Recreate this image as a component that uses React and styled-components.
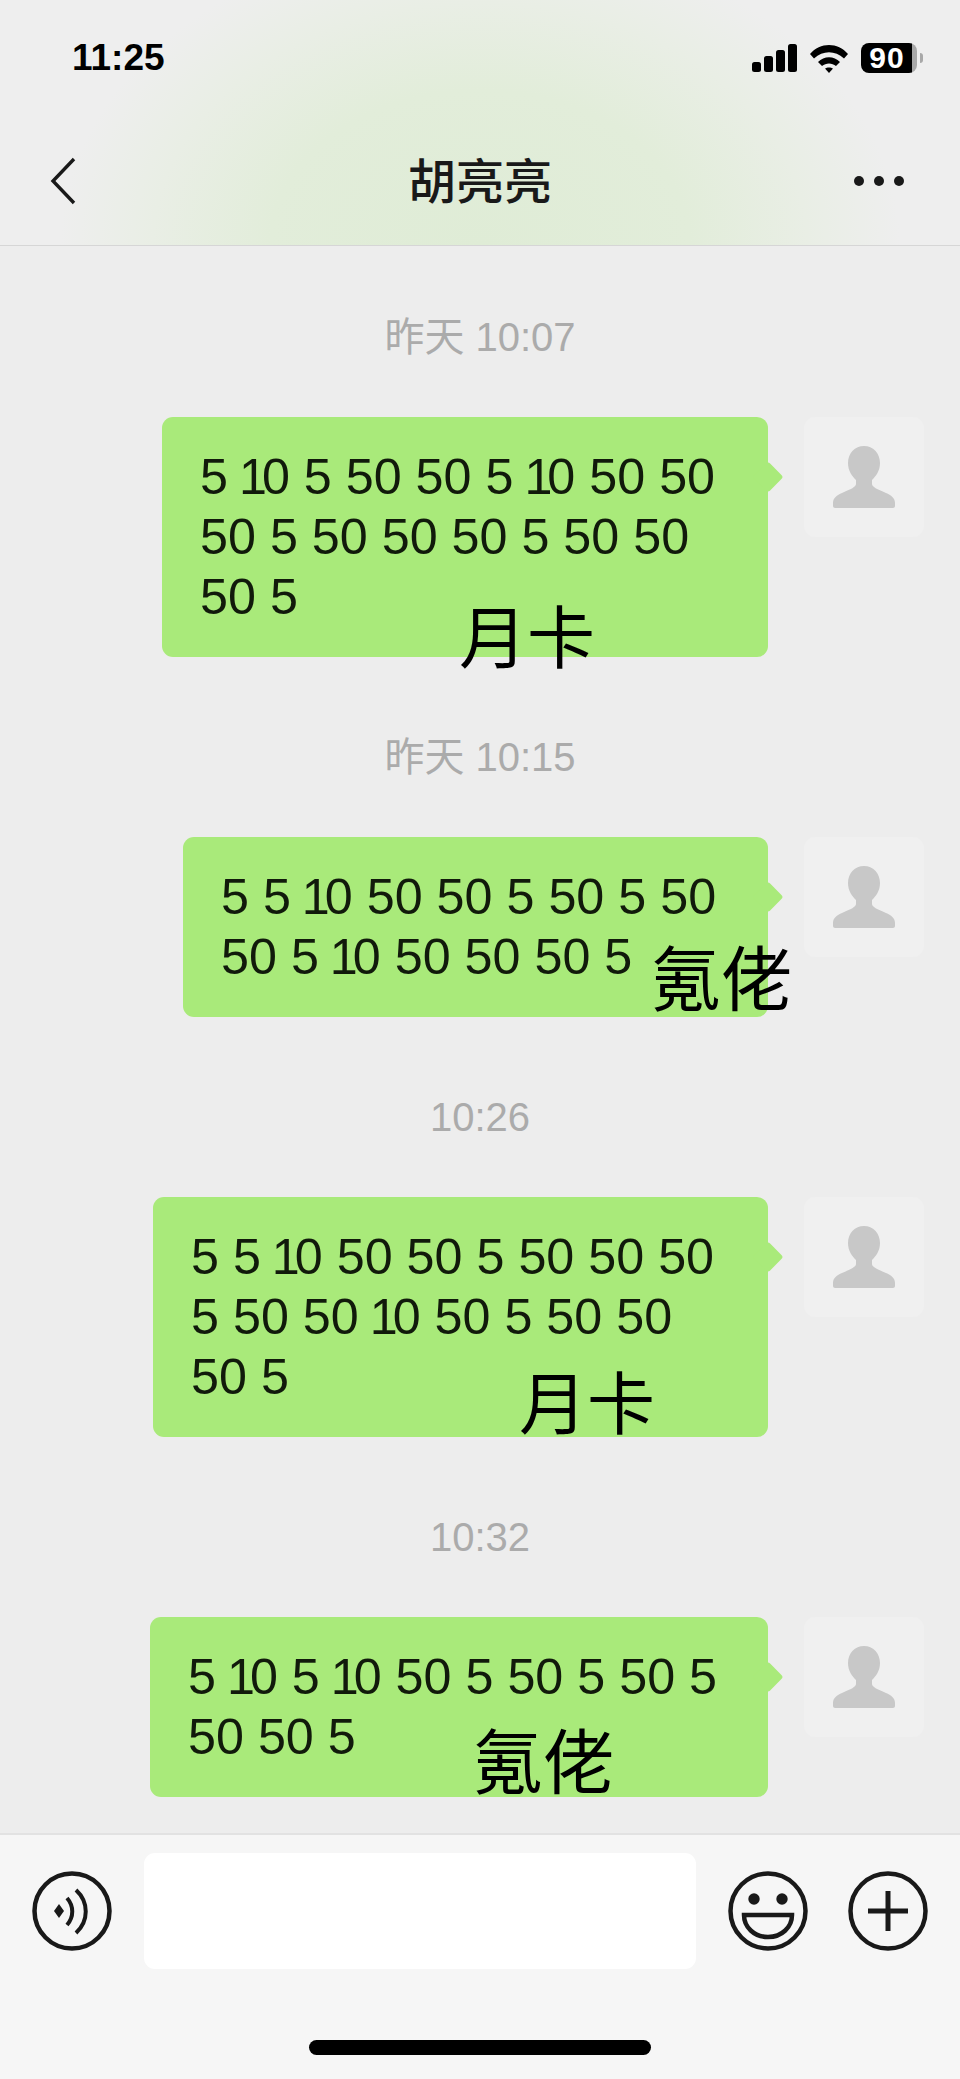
import React from 'react'
import styled, { createGlobalStyle } from 'styled-components'

const Global = createGlobalStyle`
  html, body { margin: 0; padding: 0; background: #ededed; }
  * { box-sizing: border-box; }
`

const Phone = styled.div`
  width: 960px;
  height: 2079px;
  display: flex;
  flex-direction: column;
  overflow: hidden;
  background: #ededed;
  font-family: "Liberation Sans", "Noto Sans CJK SC", sans-serif;
`

const Header = styled.header`
  height: 246px;
  flex-shrink: 0;
  display: flex;
  flex-direction: column;
  border-bottom: 1px solid #d6d6d6;
  background: radial-gradient(ellipse 420px 310px at 50% 100%, #dfecd6 0%, #e2edda 50%, #e9eee5 78%, #eeeeee 100%);
`

const StatusBar = styled.div`
  height: 116px;
  padding: 0 43px 0 72px;
  display: flex;
  align-items: center;
  justify-content: space-between;
`

const Clock = styled.span`
  font-size: 37px;
  font-weight: 700;
  color: #000;
`

const StatusIcons = styled.div`
  display: flex;
  align-items: center;
  gap: 13px;
`

const Battery = styled.div`
  position: relative;
  width: 56px;
  height: 30px;
  border-radius: 8px;
  background: linear-gradient(90deg, #000 0 91%, #a8a8a8 91% 100%);
  color: #fff;
  font-size: 30px;
  font-weight: 700;
  letter-spacing: 1px;
  display: flex;
  align-items: center;
  justify-content: center;
  padding-right: 4px;
  &::after {
    content: "";
    position: absolute;
    right: -6px;
    top: 10px;
    width: 3px;
    height: 10px;
    border-radius: 0 3px 3px 0;
    background: #a8a8a8;
  }
`

const NavBar = styled.div`
  flex: 1;
  display: flex;
  align-items: center;
  justify-content: space-between;
  padding: 0 56px 0 50px;
  position: relative;
`

const Title = styled.h1`
  position: absolute;
  left: 0;
  right: 0;
  top: 30px;
  margin: 0;
  text-align: center;
  font-size: 48px;
  line-height: 64px;
  font-weight: 500;
  font-family: "Noto Sans CJK SC", sans-serif;
  color: #191919;
`

const Dots = styled.div`
  display: flex;
  gap: 10px;
`

const Dot = styled.span`
  width: 10px;
  height: 10px;
  border-radius: 50%;
  background: #191919;
`

const Chat = styled.main`
  flex: 1;
  min-height: 0;
  display: flex;
  flex-direction: column;
  padding-top: 66px;
`

const Stamp = styled.div`
  height: 50px;
  line-height: 50px;
  text-align: center;
  font-size: 40px;
  color: #ababab;
`

const Row = styled.div`
  display: flex;
  flex-shrink: 0;
  justify-content: flex-end;
  align-items: flex-start;
  gap: 36px;
  padding: 0 36px 0 0;
  margin-top: 55px;
  margin-bottom: 75px;
`

const Bubble = styled.div`
  position: relative;
  width: ${props => props.$width}px;
  height: ${props => props.$lines * 60 + 60}px;
  padding: 30px 0 0 38px;
  background: #a9ea7a;
  border-radius: 11px;
  font-size: 50.25px;
  line-height: 60px;
  color: #111a0b;
  &::after {
    content: "";
    position: absolute;
    right: -11px;
    top: 49px;
    width: 22px;
    height: 22px;
    border-radius: 3px;
    background: #a9ea7a;
    transform: rotate(45deg);
  }
`

const Line = styled.div`
  white-space: nowrap;
`

// the font on the phone has a much narrower "1" than Liberation Sans
const One = styled.span`
  margin-left: -3px;
  letter-spacing: -5px;
`

const Overlay = styled.span`
  position: absolute;
  z-index: 1;
  left: ${props => props.$left}px;
  bottom: ${props => props.$bottom}px;
  font-family: "Noto Sans CJK SC", sans-serif;
  font-size: ${props => props.$size}px;
  line-height: ${props => props.$size}px;
  color: #000;
  white-space: nowrap;
`

const Avatar = styled.div`
  width: 120px;
  height: 120px;
  border-radius: 11px;
  background: #f0f0f0;
  display: flex;
  align-items: center;
  justify-content: center;
`

const InputBar = styled.footer`
  height: 246px;
  flex-shrink: 0;
  border-top: 2px solid #e2e2e2;
  background: #f6f6f6;
  display: flex;
  flex-direction: column;
  padding: 18px 32px 24px;
`

const Controls = styled.div`
  display: flex;
  align-items: center;
`

const TextField = styled.div`
  width: 552px;
  height: 116px;
  border-radius: 11px;
  background: #fff;
  margin: 0 32px;
`

const RoundIcon = styled.svg`
  width: 80px;
  height: 80px;
  flex-shrink: 0;
  margin-left: ${props => props.$gap || 0}px;
`

const HomeBar = styled.div`
  width: 342px;
  height: 15px;
  flex-shrink: 0;
  border-radius: 8px;
  background: #000;
  margin: auto auto 0;
`

const messages = [
  { time: '昨天 10:07', width: 606, lines: ['5 10 5 50 50 5 10 50 50', '50 5 50 50 50 5 50 50', '50 5'], tag: '月卡', size: 68, left: 297, bottom: -11 },
  { time: '昨天 10:15', width: 585, lines: ['5 5 10 50 50 5 50 5 50', '50 5 10 50 50 50 5'], tag: '氪佬', size: 71, left: 467, bottom: 7 },
  { time: '10:26', width: 615, lines: ['5 5 10 50 50 5 50 50 50', '5 50 50 10 50 5 50 50', '50 5'], tag: '月卡', size: 68, left: 366, bottom: 3 },
  { time: '10:32', width: 618, lines: ['5 10 5 10 50 5 50 5 50 5', '50 50 5'], tag: '氪佬', size: 71, left: 322, bottom: 4 },
]

function Person() {
  return (
    <svg width="64" height="64" viewBox="0 0 64 64">
      <path d="M32 1c9 0 16 7 16 17 0 8-4 13-8 17v4c0 3 5 5 14 9 5 2 9 5 9 10v3c0 1-1 2-2 2H3c-1 0-2-1-2-2v-3c0-5 4-8 9-10 9-4 14-6 14-9v-4c-4-4-8-9-8-17C16 8 23 1 32 1z" fill="#c8c8c8" />
    </svg>
  )
}

function Numbers({ text }) {
  return text.split('').map((ch, i) => (ch === '1' ? <One key={i}>1</One> : ch))
}

function Message({ msg }) {
  return (
    <>
      <Stamp>{msg.time}</Stamp>
      <Row>
        <Bubble $width={msg.width} $lines={msg.lines.length}>
          {msg.lines.map((line, i) => <Line key={i}><Numbers text={line} /></Line>)}
          <Overlay $size={msg.size} $left={msg.left} $bottom={msg.bottom}>{msg.tag}</Overlay>
        </Bubble>
        <Avatar><Person /></Avatar>
      </Row>
    </>
  )
}

export default function App() {
  return (
    <Phone>
      <Global />
      <Header>
        <StatusBar>
          <Clock>11:25</Clock>
          <StatusIcons>
            <svg width="45" height="28" viewBox="0 0 45 28">
              <rect x="0" y="18" width="9" height="10" rx="2.5" fill="#000" />
              <rect x="12" y="12" width="9" height="16" rx="2.5" fill="#000" />
              <rect x="24" y="6" width="9" height="22" rx="2.5" fill="#000" />
              <rect x="36" y="0" width="9" height="28" rx="2.5" fill="#000" />
            </svg>
            <svg width="38" height="29" viewBox="0 0 38 29">
              <path d="M0 10C10-2 28-2 38 10l-4 4.500C25 6 13 6 4 14.500z" fill="#000" />
              <path d="M8 18c6-6.500 16-6.500 22 0l-4 4c-4-3.500-10-3.500-14 0z" fill="#000" />
              <path d="M15 24.500c2-1.500 6-1.500 8 0L19 29z" fill="#000" />
            </svg>
            <Battery>90</Battery>
          </StatusIcons>
        </StatusBar>
        <NavBar>
          <svg width="26" height="48" viewBox="0 0 26 48">
            <path d="M24 2L3 24l21 22" fill="none" stroke="#191919" strokeWidth="3.4" />
          </svg>
          <Title>胡亮亮</Title>
          <Dots><Dot /><Dot /><Dot /></Dots>
        </NavBar>
      </Header>
      <Chat>
        {messages.map(msg => <Message key={msg.time} msg={msg} />)}
      </Chat>
      <InputBar>
        <Controls>
          <RoundIcon viewBox="0 0 80 80">
            <circle cx="40" cy="40" r="37.500" fill="none" stroke="#191919" strokeWidth="4.500" />
            <path d="M22 40l5-7 5 7-5 7z" fill="#191919" />
            <path d="M35 27c7 8 7 19 0 27" fill="none" stroke="#191919" strokeWidth="4" />
            <path d="M44 19c13 12 13 31 0 43" fill="none" stroke="#191919" strokeWidth="4" />
          </RoundIcon>
          <TextField />
          <RoundIcon viewBox="0 0 80 80">
            <circle cx="40" cy="40" r="37.500" fill="none" stroke="#191919" strokeWidth="4.500" />
            <circle cx="26" cy="28" r="5.700" fill="#191919" />
            <circle cx="54" cy="28" r="5.700" fill="#191919" />
            <path d="M16 44h48c0 12-10 22-24 22S16 56 16 44z" fill="none" stroke="#191919" strokeWidth="4.500" />
          </RoundIcon>
          <RoundIcon $gap={40} viewBox="0 0 80 80">
            <circle cx="40" cy="40" r="37.500" fill="none" stroke="#191919" strokeWidth="4.500" />
            <path d="M40 20v40M20 40h40" fill="none" stroke="#191919" strokeWidth="5" />
          </RoundIcon>
        </Controls>
        <HomeBar />
      </InputBar>
    </Phone>
  )
}
